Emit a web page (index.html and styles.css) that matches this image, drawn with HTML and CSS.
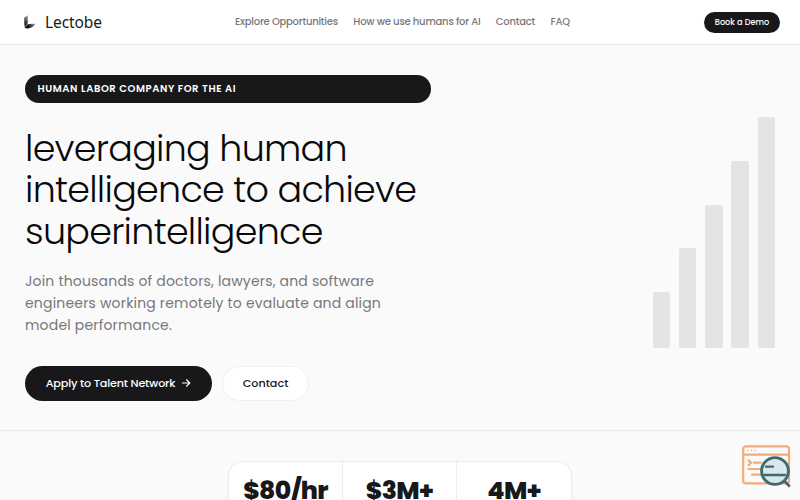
FILE: index.html
```html
<!DOCTYPE html>
<html lang="en">
<head>
    <meta charset="UTF-8">
    <meta name="viewport" content="width=device-width, initial-scale=1.0">
    <title>Lectobe</title>
    <link rel="stylesheet" href="styles.css">
</head>
<body>
    <header class="header">
        <a class="logo" href="#">
            <svg class="logo-mark" viewBox="0 0 12 14" aria-hidden="true">
                <defs>
                    <linearGradient id="stem" x1="0" y1="1" x2="0.6" y2="0">
                        <stop offset="0.3" stop-color="#111"/>
                        <stop offset="1" stop-color="#aaa"/>
                    </linearGradient>
                    <linearGradient id="foot" x1="0" y1="0.6" x2="1" y2="0.2">
                        <stop offset="0.3" stop-color="#111"/>
                        <stop offset="1" stop-color="#999"/>
                    </linearGradient>
                </defs>
                <path d="M0.3 2.5 4 0.3V8L0.8 12Q0.2 10 0.3 2.5Z" fill="url(#stem)"/>
                <path d="M0.6 12.4 4 9 11.6 8.8Q9 12.8 4 13.4Q1.4 13.6 0.6 12.4Z" fill="url(#foot)"/>
            </svg>
            <span class="logo-text">Lectobe</span>
        </a>
        <nav class="nav">
            <a href="#">Explore Opportunities</a>
            <a href="#">How we use humans for AI</a>
            <a href="#">Contact</a>
            <a href="#">FAQ</a>
        </nav>
        <a class="btn-demo" href="#">Book a Demo</a>
    </header>

    <section class="hero">
        <div class="hero-copy">
            <div class="badge">HUMAN LABOR COMPANY FOR THE AI</div>
            <h1>leveraging human intelligence to achieve superintelligence</h1>
            <p class="lead">Join thousands of doctors, lawyers, and software engineers working remotely to evaluate and align model performance.</p>
            <div class="actions">
                <a class="btn btn-primary" href="#">
                    <span>Apply to Talent Network</span>
                    <svg viewBox="0 0 10 10" aria-hidden="true"><path d="M1 5H8.8M5.3 1.5 8.8 5 5.3 8.5"/></svg>
                </a>
                <a class="btn btn-secondary" href="#">Contact</a>
            </div>
        </div>
        <div class="bars" aria-hidden="true">
            <div class="bar" style="height: 56px"></div>
            <div class="bar" style="height: 100px"></div>
            <div class="bar" style="height: 143.5px"></div>
            <div class="bar" style="height: 187px"></div>
            <div class="bar" style="height: 231px"></div>
        </div>
    </section>

    <section class="stats">
        <div class="stats-card">
            <div class="stat">$80/hr</div>
            <div class="stat">$3M+</div>
            <div class="stat">4M+</div>
        </div>
    </section>

    <svg class="inspect" viewBox="0 0 50 45" aria-hidden="true">
        <g fill="none" stroke="#f4ad78" stroke-width="2.2" stroke-linecap="round">
            <rect x="2.2" y="2.4" width="45.8" height="37" rx="2.5"/>
            <path d="M2.5 10.6H47.5"/>
            <path d="M7.5 16.4 10 18.8 7.5 21.2M12.8 18.6H20M7.5 25H20M11 30.6H20"/>
            <path d="M6.6 6.5H6.8M10.4 6.5H10.6M14.2 6.5H14.4" stroke-width="1.4"/>
        </g>
        <circle cx="34" cy="27" r="13.4" fill="#dae7ed" stroke="#3e6b70" stroke-width="2.9"/>
        <path d="M25 22.7H32M23.5 31H44" stroke="#3e6b70" stroke-width="2.3" stroke-linecap="round"/>
        <path d="M43.5 37 48.8 42.6" stroke="#3e6b70" stroke-width="2.8"/>
    </svg>
</body>
</html>
```
FILE: styles.css
```css
* {
    margin: 0;
    padding: 0;
    box-sizing: border-box;
}

body {
    height: 500px;
    overflow: hidden;
    font-family: Poppins, Inter, sans-serif;
    background: #fafafa;
    color: #18181b;
}

a {
    color: inherit;
    text-decoration: none;
}

.header {
    display: grid;
    grid-template-columns: 211px 1fr 76px;
    align-items: center;
    height: 45px;
    padding: 0 20px 0 24px;
    background: #fff;
    border-bottom: 1px solid #e8e8ea;
}

.logo {
    display: flex;
    align-items: center;
    gap: 9px;
}

.logo-mark {
    width: 12px;
    height: 14px;
}

.logo-text {
    font-family: "Noto Sans", sans-serif;
    font-size: 15.5px;
    line-height: 20px;
    letter-spacing: -0.1px;
}

.nav {
    display: flex;
    gap: 15.5px;
    font-size: 10px;
    font-weight: 500;
    letter-spacing: -0.22px;
    color: #77777b;
    white-space: nowrap;
}

.btn-demo {
    height: 21px;
    border-radius: 11px;
    background: #18181b;
    color: #fff;
    font-size: 8.2px;
    font-weight: 500;
    line-height: 21px;
    text-align: center;
}

.hero {
    display: flex;
    justify-content: space-between;
    height: 386px;
    padding: 30px 25px 0;
    border-bottom: 1px solid #e8e8ea;
}

.hero-copy {
    width: 406px;
}

.badge {
    height: 28px;
    padding-left: 12.5px;
    border-radius: 14px;
    background: #18181b;
    color: #fff;
    font-size: 10px;
    font-weight: 600;
    letter-spacing: 0.58px;
    line-height: 28px;
}

h1 {
    margin-top: 25px;
    font-size: 36.5px;
    font-weight: 300;
    letter-spacing: -0.73px;
    line-height: 41.3px;
    color: #09090b;
}

.lead {
    width: 375px;
    margin-top: 18px;
    font-size: 14px;
    letter-spacing: 0.18px;
    line-height: 22px;
    color: #77777b;
}

.actions {
    display: flex;
    gap: 10px;
    margin-top: 30px;
}

.btn {
    display: flex;
    align-items: center;
    justify-content: center;
    height: 35px;
    border-radius: 18px;
    font-size: 11.2px;
    font-weight: 500;
}

.btn-primary {
    gap: 6px;
    width: 187px;
    background: #18181b;
    color: #fff;
    letter-spacing: -0.18px;
}

.btn-primary svg {
    width: 10px;
    height: 10px;
    fill: none;
    stroke: #fff;
    stroke-width: 1.1;
}

.btn-secondary {
    width: 87px;
    background: #fff;
    border: 1px solid #f0f0f2;
}

.bars {
    display: flex;
    align-items: flex-end;
    gap: 8.75px;
    height: 273px;
}

.bar {
    width: 17.5px;
    border-radius: 2px;
    background: #e4e4e6;
}

.stats {
    height: 69px;
    padding-top: 30px;
    overflow: hidden;
}

.stats-card {
    display: grid;
    grid-template-columns: repeat(3, 1fr);
    width: 344px;
    height: 90px;
    margin: 0 auto;
    border: 1px solid #ececee;
    border-radius: 15px;
    background: #fff;
    box-shadow: 0 1px 3px rgba(0, 0, 0, 0.04);
}

.stat {
    padding-top: 11px;
    border-right: 1px solid #ececee;
    font-size: 25px;
    font-weight: 800;
    letter-spacing: -0.6px;
    line-height: 36px;
    text-align: center;
}

.stat:last-child {
    border-right: none;
}

.inspect {
    position: absolute;
    top: 444px;
    left: 741px;
    width: 50px;
    height: 45px;
}
```
